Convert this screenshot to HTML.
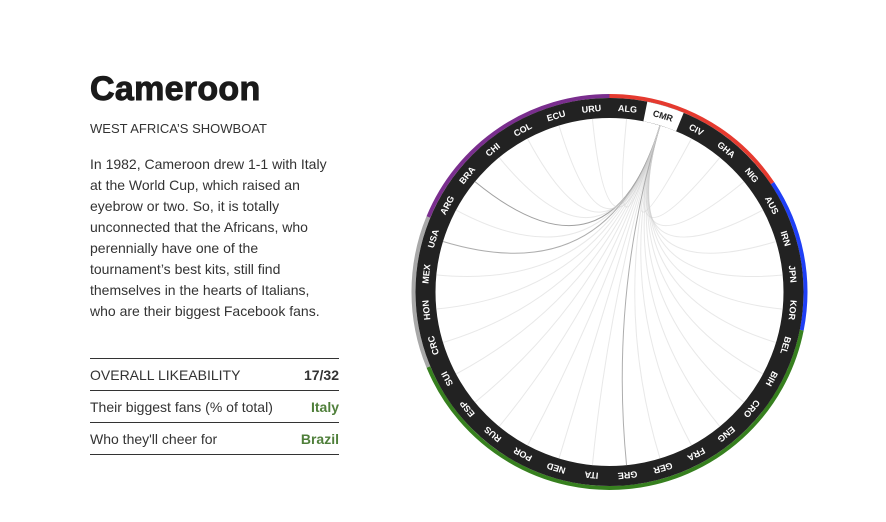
<!DOCTYPE html>
<html><head><meta charset="utf-8"><style>
body{margin:0;background:#fff;width:886px;height:522px;overflow:hidden;position:relative;font-family:"Liberation Sans",Arial,sans-serif;}
h1{position:absolute;left:90px;top:70px;margin:0;font-size:34px;font-weight:bold;color:#1a1a1a;letter-spacing:0.3px;-webkit-text-stroke:1px #1a1a1a;}
.sub{position:absolute;left:90px;top:121px;font-size:13px;color:#333;}
.body{position:absolute;left:90px;top:154px;width:245px;font-size:14px;line-height:21px;color:#333;}
table{position:absolute;left:90px;top:358px;width:249px;border-collapse:collapse;font-size:14px;color:#333;}
td{height:31px;border-top:1px solid #333;border-bottom:1px solid #333;padding:0;}
td.r{text-align:right;font-weight:bold;}
.g{color:#4f7f3a;}
svg{position:absolute;left:0;top:0;}
</style></head><body>
<h1>Cameroon</h1>
<div class="sub">WEST AFRICA’S SHOWBOAT</div>
<div class="body">In 1982, Cameroon drew 1-1 with Italy at the World Cup, which raised an eyebrow or two. So, it is totally unconnected that the Africans, who perennially have one of the tournament’s best kits, still find themselves in the hearts of Italians, who are their biggest Facebook fans.</div>
<table>
<tr><td>OVERALL LIKEABILITY</td><td class="r">17/32</td></tr>
<tr><td>Their biggest fans (% of total)</td><td class="r g">Italy</td></tr>
<tr><td>Who they'll cheer for</td><td class="r g">Brazil</td></tr>
</table>
<svg width="886" height="522" viewBox="0 0 886 522">
<g fill="none" stroke-width="4">
<path d="M609.5 96 A196 196 0 0 1 772.5 183.1" stroke="#e53a2f"/>
<path d="M772.5 183.1 A196 196 0 0 1 801.7 330.2" stroke="#1f3ff5"/>
<path d="M801.7 330.2 A196 196 0 0 1 428.4 367.0" stroke="#37801f"/>
<path d="M428.4 367.0 A196 196 0 0 1 428.4 217.0" stroke="#a8a8a8"/>
<path d="M428.4 217.0 A196 196 0 0 1 609.5 96" stroke="#7a2e8e"/>
</g>
<circle cx="609.5" cy="292" r="184" fill="none" stroke="#222" stroke-width="20"/>
<path d="M647.3 101.7 A194 194 0 0 1 683.7 112.8 L676.1 131.2 A174 174 0 0 0 643.4 121.3Z" fill="#fff"/>
<g fill="none" stroke="#ccc" stroke-width="1" stroke-opacity="0.45" transform="rotate(16.875 609.5 292)">
<path d="M609.5 118 Q609.5 292 643.4 121.3"/>
<path d="M609.5 118 Q609.5 292 676.1 131.2"/>
<path d="M609.5 118 Q609.5 292 706.2 147.3"/>
<path d="M609.5 118 Q609.5 292 732.5 169"/>
<path d="M609.5 118 Q609.5 292 754.2 195.3"/>
<path d="M609.5 118 Q609.5 292 770.3 225.4"/>
<path d="M609.5 118 Q609.5 292 780.2 258.1"/>
<path d="M609.5 118 Q609.5 292 783.5 292"/>
<path d="M609.5 118 Q609.5 292 780.2 325.9"/>
<path d="M609.5 118 Q609.5 292 770.3 358.6"/>
<path d="M609.5 118 Q609.5 292 754.2 388.7"/>
<path d="M609.5 118 Q609.5 292 732.5 415"/>
<path d="M609.5 118 Q609.5 292 706.2 436.7"/>
<path d="M609.5 118 Q609.5 292 676.1 452.8" stroke="#999" stroke-opacity="0.8"/>
<path d="M609.5 118 Q609.5 292 643.4 462.7"/>
<path d="M609.5 118 Q609.5 292 609.5 466"/>
<path d="M609.5 118 Q609.5 292 575.6 462.7"/>
<path d="M609.5 118 Q609.5 292 542.9 452.8"/>
<path d="M609.5 118 Q609.5 292 512.8 436.7"/>
<path d="M609.5 118 Q609.5 292 486.5 415"/>
<path d="M609.5 118 Q609.5 292 464.8 388.7"/>
<path d="M609.5 118 Q609.5 292 448.7 358.6"/>
<path d="M609.5 118 Q609.5 292 438.8 325.9"/>
<path d="M609.5 118 Q609.5 292 435.5 292" stroke="#999" stroke-opacity="0.8"/>
<path d="M609.5 118 Q609.5 292 438.8 258.1"/>
<path d="M609.5 118 Q609.5 292 448.7 225.4" stroke="#888" stroke-opacity="0.8"/>
<path d="M609.5 118 Q609.5 292 464.8 195.3"/>
<path d="M609.5 118 Q609.5 292 486.5 169"/>
<path d="M609.5 118 Q609.5 292 512.8 147.3"/>
<path d="M609.5 118 Q609.5 292 542.9 131.2"/>
<path d="M609.5 118 Q609.5 292 575.6 121.3"/>
</g>
<g font-family="Liberation Sans,Arial,sans-serif" font-size="9" font-weight="bold" fill="#fff" text-anchor="middle">
<text transform="rotate(16.875 609.5 292)" x="609.5" y="111" fill="#222">CMR</text>
<text transform="rotate(28.125 609.5 292)" x="609.5" y="111">CIV</text>
<text transform="rotate(39.375 609.5 292)" x="609.5" y="111">GHA</text>
<text transform="rotate(50.625 609.5 292)" x="609.5" y="111">NIG</text>
<text transform="rotate(61.875 609.5 292)" x="609.5" y="111">AUS</text>
<text transform="rotate(73.125 609.5 292)" x="609.5" y="111">IRN</text>
<text transform="rotate(84.375 609.5 292)" x="609.5" y="111">JPN</text>
<text transform="rotate(95.625 609.5 292)" x="609.5" y="111">KOR</text>
<text transform="rotate(106.875 609.5 292)" x="609.5" y="111">BEL</text>
<text transform="rotate(118.125 609.5 292)" x="609.5" y="111">BIH</text>
<text transform="rotate(129.375 609.5 292)" x="609.5" y="111">CRO</text>
<text transform="rotate(140.625 609.5 292)" x="609.5" y="111">ENG</text>
<text transform="rotate(151.875 609.5 292)" x="609.5" y="111">FRA</text>
<text transform="rotate(163.125 609.5 292)" x="609.5" y="111">GER</text>
<text transform="rotate(174.375 609.5 292)" x="609.5" y="111">GRE</text>
<text transform="rotate(185.625 609.5 292)" x="609.5" y="111">ITA</text>
<text transform="rotate(196.875 609.5 292)" x="609.5" y="111">NED</text>
<text transform="rotate(208.125 609.5 292)" x="609.5" y="111">POR</text>
<text transform="rotate(219.375 609.5 292)" x="609.5" y="111">RUS</text>
<text transform="rotate(230.625 609.5 292)" x="609.5" y="111">ESP</text>
<text transform="rotate(241.875 609.5 292)" x="609.5" y="111">SUI</text>
<text transform="rotate(253.125 609.5 292)" x="609.5" y="111">CRC</text>
<text transform="rotate(264.375 609.5 292)" x="609.5" y="111">HON</text>
<text transform="rotate(275.625 609.5 292)" x="609.5" y="111">MEX</text>
<text transform="rotate(286.875 609.5 292)" x="609.5" y="111">USA</text>
<text transform="rotate(298.125 609.5 292)" x="609.5" y="111">ARG</text>
<text transform="rotate(309.375 609.5 292)" x="609.5" y="111">BRA</text>
<text transform="rotate(320.625 609.5 292)" x="609.5" y="111">CHI</text>
<text transform="rotate(331.875 609.5 292)" x="609.5" y="111">COL</text>
<text transform="rotate(343.125 609.5 292)" x="609.5" y="111">ECU</text>
<text transform="rotate(354.375 609.5 292)" x="609.5" y="111">URU</text>
<text transform="rotate(365.625 609.5 292)" x="609.5" y="111">ALG</text>
</g>
</svg>
</body></html>
